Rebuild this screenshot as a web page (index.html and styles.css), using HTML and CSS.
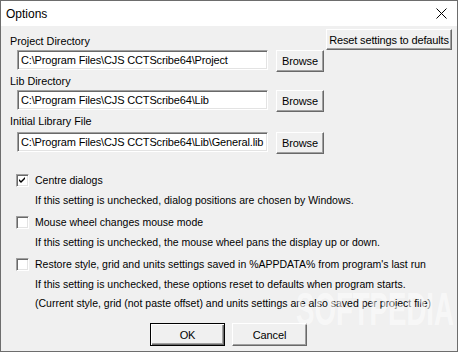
FILE: index.html
```html
<!DOCTYPE html>
<html lang="en">
  <head>
    <meta charset="UTF-8" />
    <title>Options</title>
    <link rel="stylesheet" href="styles.css">
  </head>
  <body>
    <div class="window">
      <div class="titlebar">
        <span class="title">Options</span>
        <svg class="close" width="11" height="11" viewBox="0 0 11 11">
          <path d="M0.5 0.5 L10.5 10.5 M10.5 0.5 L0.5 10.5" stroke="#000" stroke-width="1" fill="none" />
        </svg>
      </div>

      <div class="content">
        <div class="top-row">
          <span class="label">Project Directory</span>
          <button class="btn reset">Reset settings to defaults</button>
        </div>
        <div class="field">
          <div class="textbox">C:\Program Files\CJS CCTScribe64\Project</div>
          <button class="btn browse">Browse</button>
        </div>

        <div class="label row-label">Lib Directory</div>
        <div class="field">
          <div class="textbox">C:\Program Files\CJS CCTScribe64\Lib</div>
          <button class="btn browse">Browse</button>
        </div>

        <div class="label row-label tall">Initial Library File</div>
        <div class="field">
          <div class="textbox">C:\Program Files\CJS CCTScribe64\Lib\General.lib</div>
          <button class="btn browse">Browse</button>
        </div>

        <div class="options">
          <div class="option">
            <div class="check-line">
              <span class="checkbox">
                <svg width="11" height="11" viewBox="0 0 11 11">
                  <path d="M2 4 L4 6 L8 2 L8 4 L4 8 L2 6 Z" fill="#000" />
                </svg>
              </span>
              <span>Centre dialogs</span>
            </div>
            <div class="desc">If this setting is unchecked, dialog positions are chosen by Windows.</div>
          </div>

          <div class="option">
            <div class="check-line">
              <span class="checkbox"></span>
              <span>Mouse wheel changes mouse mode</span>
            </div>
            <div class="desc">If this setting is unchecked, the mouse wheel pans the display up or down.</div>
          </div>

          <div class="option">
            <div class="check-line">
              <span class="checkbox"></span>
              <span>Restore style, grid and units settings saved in %APPDATA% from program's last run</span>
            </div>
            <div class="desc">If this setting is unchecked, these options reset to defaults when program starts.</div>
            <div class="desc">(Current style, grid (not paste offset) and units settings are also saved per project file)</div>
          </div>
        </div>

        <div class="actions">
          <button class="btn dialog default">OK</button>
          <button class="btn dialog">Cancel</button>
        </div>
      </div>

      <div class="watermark">SOFTPEDIA</div>
    </div>
  </body>
</html>
```

FILE: styles.css
```css
body {
  margin: 0;
  background: #f0f0f0;
  font-family: "Liberation Sans", Arial, sans-serif;
  font-size: 10.5px;
  color: #000;
}
.window {
  position: relative;
  width: 458px;
  height: 352px;
  box-sizing: border-box;
  border: 1px solid #6d6d6d;
  background: #f0f0f0;
  overflow: hidden;
}
.titlebar {
  height: 25px;
  background: #fff;
  display: flex;
  align-items: center;
  justify-content: space-between;
  padding: 0 10px 0 5px;
}
.title {
  font-size: 12px;
  padding-top: 1px;
}
.close {
  display: block;
}
.content {
  padding: 0 5px 0 9px;
}
.label {
  font-size: 10.8px;
}
.top-row {
  display: flex;
  justify-content: space-between;
  align-items: flex-end;
  padding-top: 2px;
  height: 22px;
}
.top-row .label {
  padding-bottom: 3px;
}
.row-label {
  height: 18px;
  line-height: 19px;
}
.row-label.tall {
  height: 20px;
}
.field {
  display: flex;
  align-items: flex-start;
  margin-left: 7px;
  gap: 8px;
}
.textbox {
  width: 251px;
  height: 20px;
  box-sizing: border-box;
  background: #fff;
  border: 1px solid;
  border-color: #a0a0a0 #fff #fff #a0a0a0;
  box-shadow: inset 1px 1px #696969, inset -1px -1px #e3e3e3;
  padding: 3px 0 0 3px;
  white-space: nowrap;
  overflow: hidden;
  font-size: 11px;
  letter-spacing: -0.15px;
}
.btn {
  font-family: "Liberation Sans", Arial, sans-serif;
  font-size: 11px;
  color: #000;
  background: #f0f0f0;
  border: 1px solid;
  border-color: #fff #696969 #696969 #fff;
  box-shadow: inset -1px -1px #a0a0a0;
  padding: 0;
  box-sizing: border-box;
  letter-spacing: -0.15px;
}
.browse {
  width: 48px;
  height: 22px;
}
.reset {
  width: 126px;
  height: 21px;
}
.options {
  margin-top: 16px;
  margin-left: 6px;
}
.option {
  margin-bottom: 2px;
}
.check-line {
  display: flex;
  align-items: center;
  gap: 6px;
  height: 20px;
}
.checkbox {
  width: 13px;
  height: 13px;
  box-sizing: border-box;
  background: #fff;
  border: 1px solid;
  border-color: #a0a0a0 #fff #fff #a0a0a0;
  box-shadow: inset 1px 1px #696969, inset -1px -1px #e3e3e3;
  display: flex;
  align-items: center;
  justify-content: center;
}
.checkbox svg {
  display: block;
}
.desc {
  margin-left: 19px;
  height: 20px;
  line-height: 20px;
}
.desc + .desc {
  height: 19px;
  line-height: 18px;
}
.actions {
  display: flex;
  justify-content: center;
  gap: 7px;
  margin-top: 10px;
  padding-right: 5px;
}
.dialog {
  width: 75px;
  height: 23px;
}
.default {
  border: 1px solid #000;
  box-shadow: inset 1px 1px #fff, inset -1px -1px #696969, inset -2px -2px #a0a0a0;
}
.watermark {
  position: absolute;
  left: 295px;
  top: 281px;
  font-size: 46px;
  font-weight: bold;
  color: rgba(255, 255, 255, 0.55);
  transform: scaleX(0.6);
  transform-origin: left top;
  pointer-events: none;
}
```
